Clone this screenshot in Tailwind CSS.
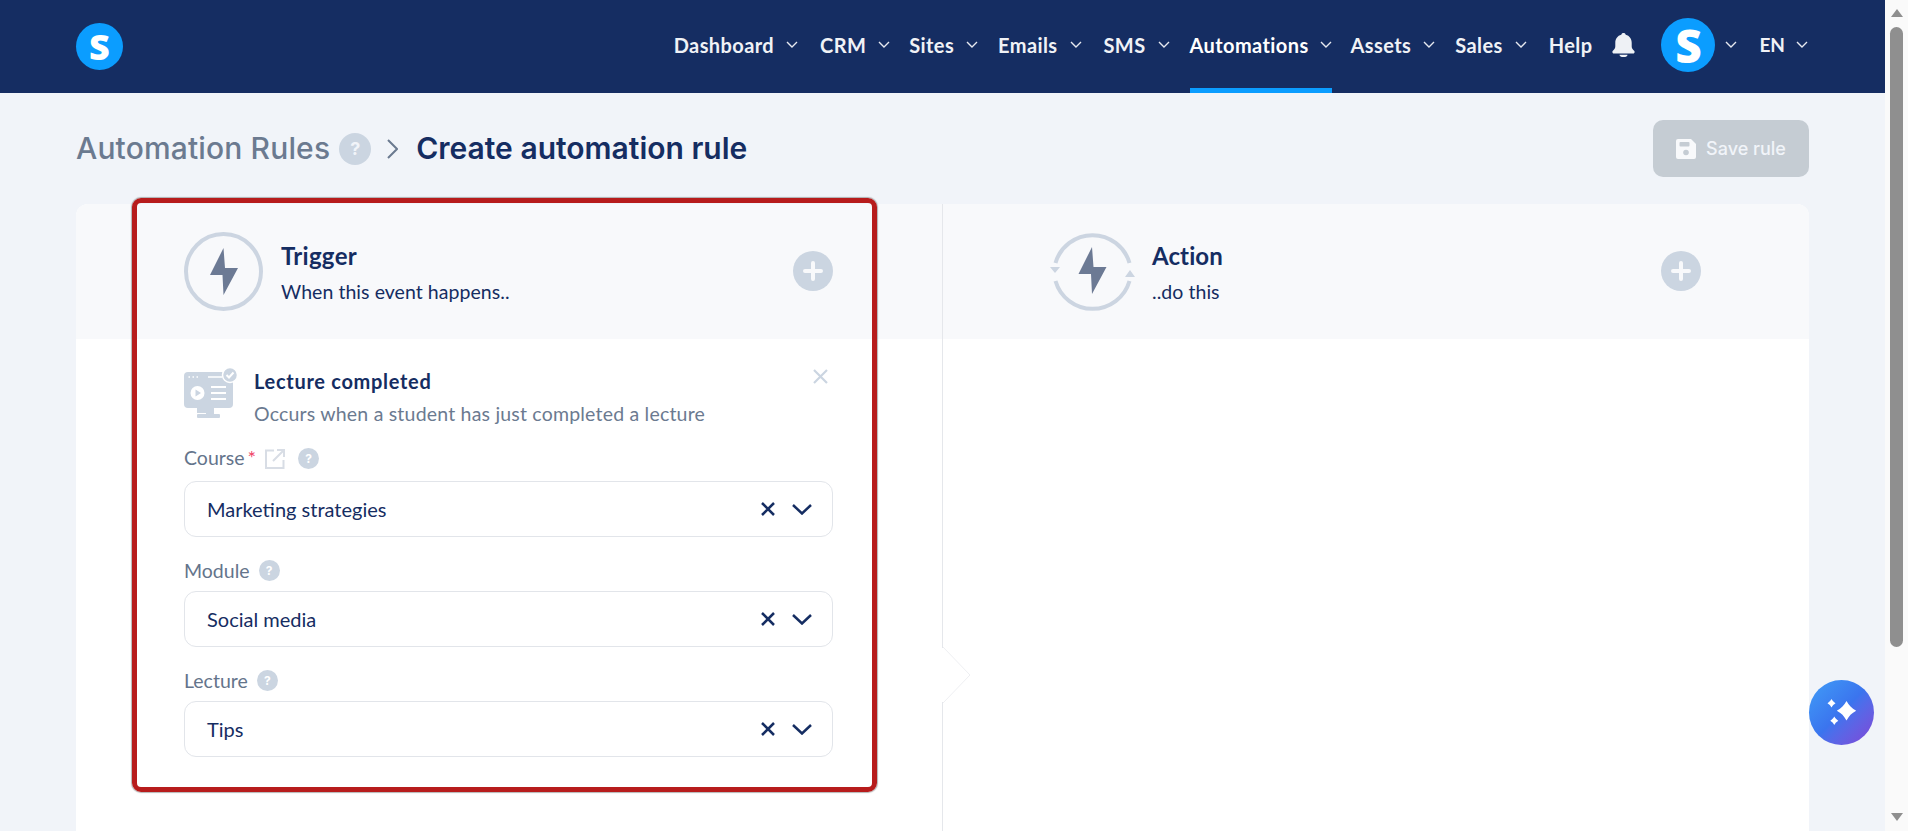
<!DOCTYPE html>
<html lang="en">
<head>
<meta charset="utf-8">
<title>Create automation rule</title>
<script src="https://cdn.jsdelivr.net/npm/@tailwindcss/browser@4"></script>
</head>
<body class="m-0">
<div class="flex h-[831px] w-[1908px] overflow-hidden bg-[#f1f4f9] font-['Lato',sans-serif] text-[#152d62]">
  <div class="relative flex w-[1885px] flex-col">
    <header class="flex h-[93px] shrink-0 items-center bg-[#152d62] pl-[76px] pr-[77px] text-[20px] font-bold tracking-[0.4px] text-[#f0f2f6]">
      <div class="flex h-[47px] w-[47px] items-center justify-center rounded-full bg-[#0b9dff] font-['Open_Sans',sans-serif] text-[36px] font-extrabold leading-none tracking-normal text-white">S</div>
      <nav class="ml-auto flex h-full items-center">
        <a class="flex h-full items-center gap-[12px] pb-[4px]">Dashboard<svg class="h-[7px] w-[12px]" viewBox="0 0 12 7" fill="none" stroke="#e6e9f0" stroke-width="1.4"><path d="M1 1l5 5 5-5"/></svg></a>
        <a class="ml-[22px] flex h-full items-center gap-[12px] pb-[4px]">CRM<svg class="h-[7px] w-[12px]" viewBox="0 0 12 7" fill="none" stroke="#e6e9f0" stroke-width="1.4"><path d="M1 1l5 5 5-5"/></svg></a>
        <a class="ml-[19px] flex h-full items-center gap-[12px] pb-[4px]">Sites<svg class="h-[7px] w-[12px]" viewBox="0 0 12 7" fill="none" stroke="#e6e9f0" stroke-width="1.4"><path d="M1 1l5 5 5-5"/></svg></a>
        <a class="ml-[20px] flex h-full items-center gap-[12px] pb-[4px]">Emails<svg class="h-[7px] w-[12px]" viewBox="0 0 12 7" fill="none" stroke="#e6e9f0" stroke-width="1.4"><path d="M1 1l5 5 5-5"/></svg></a>
        <a class="ml-[22px] flex h-full items-center gap-[12px] pb-[4px]">SMS<svg class="h-[7px] w-[12px]" viewBox="0 0 12 7" fill="none" stroke="#e6e9f0" stroke-width="1.4"><path d="M1 1l5 5 5-5"/></svg></a>
        <a class="ml-[20px] flex h-full items-center gap-[11px] border-b-[5px] border-[#0b9dff] pt-[1px] text-white">Automations<svg class="h-[7px] w-[12px]" viewBox="0 0 12 7" fill="none" stroke="#e6e9f0" stroke-width="1.4"><path d="M1 1l5 5 5-5"/></svg></a>
        <a class="ml-[19px] flex h-full items-center gap-[12px] pb-[4px]">Assets<svg class="h-[7px] w-[12px]" viewBox="0 0 12 7" fill="none" stroke="#e6e9f0" stroke-width="1.4"><path d="M1 1l5 5 5-5"/></svg></a>
        <a class="ml-[20px] flex h-full items-center gap-[12px] pb-[4px]">Sales<svg class="h-[7px] w-[12px]" viewBox="0 0 12 7" fill="none" stroke="#e6e9f0" stroke-width="1.4"><path d="M1 1l5 5 5-5"/></svg></a>
        <a class="ml-[22px] flex h-full items-center pb-[4px]">Help</a>
        <svg class="mb-[4px] ml-[20px] h-[24px] w-[23px]" viewBox="0 0 23 24" fill="#eef1f5"><path d="M11.500 0c1.200 0 2 .7 2.200 1.700 3.800 1 6 4 6 8v3.500c0 2 1 3.300 2.400 4.500 1 .9.500 2.800-1 2.800H1.900c-1.500 0-2-1.900-1-2.800 1.400-1.200 2.400-2.500 2.400-4.500V9.700c0-4 2.200-7 6-8C9.500.7 10.300 0 11.500 0z"/><path d="M7.500 21.700h8c0 1.500-1.500 2.300-4 2.300s-4-.8-4-2.300z"/></svg>
        <div class="mb-[4px] ml-[26px] flex h-[54px] w-[54px] items-center justify-center rounded-full bg-[#0b9dff] font-['Open_Sans',sans-serif] text-[46px] font-extrabold leading-none tracking-normal text-white">S</div>
        <svg class="mb-[4px] ml-[10px] h-[7px] w-[12px]" viewBox="0 0 12 7" fill="none" stroke="#e6e9f0" stroke-width="1.4"><path d="M1 1l5 5 5-5"/></svg>
        <span class="mb-[3px] ml-[22px] text-[19px] font-bold tracking-normal">EN</span>
        <svg class="mb-[4px] ml-[11px] h-[7px] w-[12px]" viewBox="0 0 12 7" fill="none" stroke="#e6e9f0" stroke-width="1.4"><path d="M1 1l5 5 5-5"/></svg>
      </nav>
    </header>

    <main class="flex min-h-0 flex-1 flex-col pl-[76px] pr-[76px] pt-[27px]">
      <div class="flex h-[57px] shrink-0 items-center font-['Inter',sans-serif]">
        <h2 class="mb-[1px] text-[30px] font-medium leading-none tracking-[0.15px] text-[#6b7a90]">Automation Rules</h2>
        <span class="ml-[9px] flex h-[32px] w-[32px] items-center justify-center rounded-full bg-[#cbd5e1] text-[18px] font-bold text-[#f1f4f9]">?</span>
        <svg class="ml-[16px] h-[20px] w-[11px]" viewBox="0 0 11 20" fill="none" stroke="#6b7a90" stroke-width="2"><path d="M1 1l9 9-9 9"/></svg>
        <h1 class="mb-[1px] ml-[18px] text-[30px] font-semibold leading-none">Create automation rule</h1>
        <button class="ml-auto flex h-[57px] w-[156px] items-center justify-center gap-[10px] rounded-[10px] bg-[#c5ccd3] text-[18px] font-medium text-[#f1f4f9]">
          <svg class="h-[20px] w-[20px]" viewBox="0 0 20 20"><path fill="#f8f9fb" d="M2 0h13l5 5v13a2 2 0 0 1-2 2H2a2 2 0 0 1-2-2V2a2 2 0 0 1 2-2z"/><rect x="3.500" y="3" width="10" height="4.500" rx="1" fill="#c5ccd3"/><circle cx="10" cy="13.500" r="2.800" fill="#c5ccd3"/></svg>
          Save rule
        </button>
      </div>

      <section class="relative mt-[27px] flex min-h-0 flex-1 rounded-t-xl bg-white">
        <div class="w-[867px] shrink-0 border-r border-[#e5e7eb]">
          <div class="flex h-[135px] items-center rounded-tl-xl bg-[#f8f9fb] pl-[108px] pr-[109px]">
            <svg class="mb-[1px] h-[79px] w-[79px] shrink-0" viewBox="0 0 79 79"><circle cx="39.500" cy="39.500" r="37.500" fill="none" stroke="#ccd5e1" stroke-width="4"/><path transform="translate(26 16)" fill="#6c7a94" d="M13.500 0L0 27h12.500l1 20L28 20H15z"/></svg>
            <div class="ml-[18px] pt-[3px]">
              <div class="text-[24px] font-bold leading-[30px] tracking-[0.3px]">Trigger</div>
              <div class="mt-[8px] text-[19.500px] leading-[26px] tracking-[0.05px]">When this event happens..</div>
            </div>
            <span class="mb-[1px] ml-auto flex h-[40px] w-[40px] items-center justify-center rounded-full bg-[#cbd5e1]"><svg class="h-[20px] w-[20px]" viewBox="0 0 20 20" stroke="#f8f9fb" stroke-width="4" stroke-linecap="round"><path d="M10 2v16M2 10h16"/></svg></span>
          </div>
          <div class="pl-[108px] pr-[109px] pt-[28px]">
            <div class="relative flex h-[51px] items-start">
              <svg class="h-[51px] w-[54px] shrink-0" viewBox="0 0 54 51">
                <rect x="0" y="5" width="49" height="36" rx="4" fill="#cbd5e1"/>
                <rect x="13" y="41" width="10" height="5" fill="#cbd5e1"/>
                <rect x="13" y="47" width="23" height="4" rx="1" fill="#cbd5e1"/>
                <rect x="22" y="41" width="8" height="6" fill="#cbd5e1"/>
                <path d="M4.500 10h1.500M8.500 10h1.500M12.500 10h1.500M24 10h14" stroke="#fff" stroke-width="1.500"/>
                <circle cx="13.500" cy="26" r="7" fill="#fff"/>
                <path d="M11.500 22.500l5.500 3.500-5.500 3.500z" fill="#cbd5e1"/>
                <path d="M27 20h15M27 26h15M27 32h15" stroke="#fff" stroke-width="2"/>
                <circle cx="46" cy="8" r="7.500" fill="#cbd5e1" stroke="#fff" stroke-width="1.500"/>
                <path d="M42.500 8l2.500 2.500 4.500-5" fill="none" stroke="#fff" stroke-width="2"/>
              </svg>
              <div class="ml-[16px]">
                <div class="mt-[1px] text-[20px] font-bold leading-[26px] tracking-[0.7px]">Lecture completed</div>
                <div class="mt-[7px] text-[19.500px] leading-[26px] tracking-[0.2px] text-[#6b7a90]">Occurs when a student has just completed a lecture</div>
              </div>
              <svg class="absolute right-[5px] top-[2px] h-[15px] w-[15px]" viewBox="0 0 15 15" stroke="#cbd5e1" stroke-width="2.200"><path d="M1 1l13 13M14 1L1 14"/></svg>
            </div>

            <div class="mt-[30px] flex h-[21px] items-center text-[19.500px] text-[#64748b]">
              <span class="mb-[2px]">Course</span><span class="ml-[3px] mb-[3px] text-[20px] leading-none text-[#ef4466]">*</span>
              <svg class="ml-[9px] h-[20px] w-[20px]" viewBox="0 0 20 20" fill="none" stroke="#d8dde5" stroke-width="2"><path d="M9 1.500H1V19h17.500v-8M12 1h7v7M19 1L8 12"/></svg>
              <span class="ml-[13px] flex h-[21px] w-[21px] items-center justify-center rounded-full bg-[#cbd5e1] font-['Inter',sans-serif] text-[12px] font-bold text-white">?</span>
            </div>
            <div class="mt-[12px] flex h-[56px] items-center rounded-xl border border-[#e2e5ea] bg-white pl-[22px] pr-[20px] text-[20px]">
              <span>Marketing strategies</span>
              <svg class="ml-auto h-[14px] w-[14px]" viewBox="0 0 14 14" stroke="#152d62" stroke-width="2.500"><path d="M1 1l12 12M13 1L1 13"/></svg>
              <svg class="ml-[17px] h-[11px] w-[20px]" viewBox="0 0 20 11" fill="none" stroke="#152d62" stroke-width="2.500"><path d="M1 1l9 8.500L19 1"/></svg>
            </div>

            <div class="mt-[23px] flex h-[21px] items-center text-[19.500px] text-[#64748b]">
              <span>Module</span>
              <span class="ml-[9px] flex h-[21px] w-[21px] items-center justify-center rounded-full bg-[#cbd5e1] font-['Inter',sans-serif] text-[12px] font-bold text-white">?</span>
            </div>
            <div class="mt-[10px] flex h-[56px] items-center rounded-xl border border-[#e2e5ea] bg-white pl-[22px] pr-[20px] text-[20px]">
              <span>Social media</span>
              <svg class="ml-auto h-[14px] w-[14px]" viewBox="0 0 14 14" stroke="#152d62" stroke-width="2.500"><path d="M1 1l12 12M13 1L1 13"/></svg>
              <svg class="ml-[17px] h-[11px] w-[20px]" viewBox="0 0 20 11" fill="none" stroke="#152d62" stroke-width="2.500"><path d="M1 1l9 8.500L19 1"/></svg>
            </div>

            <div class="mt-[23px] flex h-[21px] items-center text-[19.500px] text-[#64748b]">
              <span>Lecture</span>
              <span class="ml-[9px] flex h-[21px] w-[21px] items-center justify-center rounded-full bg-[#cbd5e1] font-['Inter',sans-serif] text-[12px] font-bold text-white">?</span>
            </div>
            <div class="mt-[10px] flex h-[56px] items-center rounded-xl border border-[#e2e5ea] bg-white pl-[22px] pr-[20px] text-[20px]">
              <span>Tips</span>
              <svg class="ml-auto h-[14px] w-[14px]" viewBox="0 0 14 14" stroke="#152d62" stroke-width="2.500"><path d="M1 1l12 12M13 1L1 13"/></svg>
              <svg class="ml-[17px] h-[11px] w-[20px]" viewBox="0 0 20 11" fill="none" stroke="#152d62" stroke-width="2.500"><path d="M1 1l9 8.500L19 1"/></svg>
            </div>
          </div>
        </div>

        <div class="min-w-0 flex-1">
          <div class="flex h-[135px] items-center rounded-tr-xl bg-[#f8f9fb] pl-[107px] pr-[108px]">
            <svg class="h-[82px] w-[85px] shrink-0" viewBox="0 0 85 82">
              <path d="M5.500 32A38.500 38.500 0 0 1 79.500 32M5.500 50A38.500 38.500 0 0 0 79.500 50" fill="none" stroke="#ccd5e1" stroke-width="4"/>
              <path d="M0 36h10l-5 6zM75 46h10l-5-7z" fill="#ccd5e1"/>
              <path transform="translate(28.500 16)" fill="#6c7a94" d="M13.500 0L0 27h12.500l1 20L28 20H15z"/>
            </svg>
            <div class="ml-[17px] pt-[3px]">
              <div class="text-[24px] font-bold leading-[30px] tracking-[0.1px]">Action</div>
              <div class="mt-[8px] text-[19.500px] leading-[26px] tracking-[0.05px]">..do this</div>
            </div>
            <span class="mb-[1px] ml-auto flex h-[40px] w-[40px] items-center justify-center rounded-full bg-[#cbd5e1]"><svg class="h-[20px] w-[20px]" viewBox="0 0 20 20" stroke="#f8f9fb" stroke-width="4" stroke-linecap="round"><path d="M10 2v16M2 10h16"/></svg></span>
          </div>
        </div>

        <svg class="absolute left-[866px] top-[443px] h-[56px] w-[29px]" viewBox="0 0 29 56"><path d="M1 0L28 28 1 56" fill="#fff" stroke="#eeeff2" stroke-width="1"/><rect x="0" y="1" width="1.500" height="54" fill="#fff"/></svg>

        <div class="pointer-events-none absolute left-[56px] top-[-6px] h-[594px] w-[745px] rounded-[9px] border-[5px] border-[#b71c1c] shadow-[0_0_1px_1px_rgba(90,90,90,0.45)]"></div>
      </section>
    </main>

    <button class="absolute left-[1809px] top-[680px] h-[65px] w-[65px] rounded-full bg-linear-to-br from-[#419df7] via-[#3b74ee] to-[#7d43d6]">
      <svg class="h-[65px] w-[65px]" viewBox="0 0 65 65" fill="#fff">
        <path d="M37.500 21c2.500 4.500 5 7.200 9.700 9.700-4.700 2.500-7.200 5.200-9.700 9.700-2.500-4.500-5-7.200-9.700-9.700 4.700-2.500 7.200-5.200 9.700-9.700z"/>
        <path d="M22.500 19c1 1.800 2.200 3 4 4.200-1.800 1.200-3 2.400-4 4.200-1-1.800-2.200-3-4-4.200 1.800-1.200 3-2.400 4-4.200z"/>
        <path d="M25.300 36.500c1 1.800 2.200 3 4 4.200-1.800 1.200-3 2.400-4 4.200-1-1.800-2.200-3-4-4.200 1.800-1.200 3-2.400 4-4.200z"/>
      </svg>
    </button>
  </div>

  <aside class="flex w-[23px] shrink-0 flex-col items-center bg-[#fafafa]">
    <svg class="mt-[9px] h-[8px] w-[12px]" viewBox="0 0 12 8" fill="#8f8f8f"><path d="M6 0l6 8H0z"/></svg>
    <div class="mt-[10px] h-[620px] w-[13px] rounded-full bg-[#8f8f8f]"></div>
    <svg class="mt-auto mb-[10px] h-[8px] w-[12px]" viewBox="0 0 12 8" fill="#8f8f8f"><path d="M0 0h12L6 8z"/></svg>
  </aside>
</div>
</body>
</html>
